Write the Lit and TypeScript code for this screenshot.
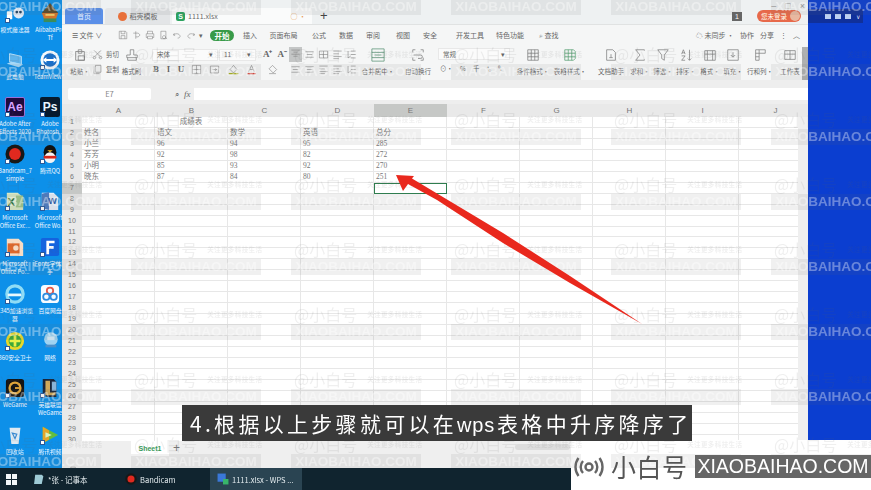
import { LitElement, html, css, svg } from "lit";
import { customElement } from "lit/decorators.js";

const ICONS: Record<string, any> = {
  save: svg`<path d="M2 2h10l2 2v10H2zM5 2v4h6V2M5 14v-5h6v5"/>`,
  share: svg`<path d="M2 5h8l3 3-3 3H6M6 2v12"/>`,
  print: svg`<path d="M4 6V2h8v4M4 12H2V6h12v6h-2M4 10h8v4H4z"/>`,
  preview: svg`<path d="M3 2h8v12H3zM8 9a2.500 2.500 0 1 0 .1 0M10 12l3 2"/>`,
  undo: svg`<path d="M4 5l-2 3 3 1M3 8c2-3 9-3 10 2-.3 2-2 3-4 3"/>`,
  redo: svg`<path d="M12 5l2 3-3 1M13 8c-2-3-9-3-10 2 .3 2 2 3 4 3"/>`,
  paste: svg`<path d="M3 4h3V2h4v2h3v10H3zM6 4h4v2H6zM6 9h7v5H6z"/>`,
  cut: svg`<path d="M3 2l9 9M13 2l-9 9"/><circle cx="3.500" cy="12.500" r="1.800"/><circle cx="12.500" cy="12.500" r="1.800"/>`,
  copy: svg`<path d="M5 2h8v10H5zM3 4v10h8"/>`,
  brush: svg`<path d="M6 2h4v6h4v3H2V8h4zM3 11v3h10v-3"/>`,
  border: svg`<path d="M2 2h12v12H2zM8 2v12M2 8h12"/>`,
  merge: svg`<path d="M2 3h12v10H2zM5 8h6M9 6l2 2-2 2"/>`,
  fill: svg`<path d="M8 2l5 6-5 5-5-5z"/><path d="M1 14h14" stroke="#a8b020" stroke-width="2"/>`,
  color: svg`<path d="M4 11l4-9 4 9M5.500 8h5"/><path d="M2 14h12" stroke="#d9453a" stroke-width="2"/>`,
  clear: svg`<path d="M8 2l6 6-5 5-6-6zM3 14h10"/>`,
  a1: svg`<path d="M2 3h12M5 6h6M2 9h12M5 12h6"/>`,
  a2: svg`<path d="M2 4h12M4 8h8M2 12h12"/>`,
  a3: svg`<path d="M2 3h12v10H2zM2 8h12M8 3v10"/>`,
  a4: svg`<path d="M2 3h12M2 7h8M2 11h12M2 14h8"/>`,
  a5: svg`<path d="M3 3v10l4-3M7 3h7M7 8h7M7 13h7"/>`,
  mergeBig: svg`<path d="M1 1h14v14H1zM1 5h14M1 11h14M4 8h8" stroke="#4e8a6a"/>`,
  wrap: svg`<path d="M2 2v3M2 2h3M14 2v3M14 2h-3M2 14v-3M2 14h3M14 14v-3M14 14h-3M3 8h8a2 2 0 0 1 0 4H8"/>`,
  cond: svg`<path d="M2 2h12v12H2zM2 6h12M2 10h12M6 2v12M10 2v12"/>`,
  table: svg`<path d="M2 2h10l2 2v8l-2 2H2zM2 6h12M2 10h12M6 2v12M10 2v12" stroke="#4e9a6a"/>`,
  doc: svg`<path d="M3 2h7l3 3v9H3zM8 7v4M6 11h4"/>`,
  sum: svg`<path d="M13 3V2H3l5 6-5 6h10v-1"/>`,
  filter: svg`<path d="M2 2h12L9.500 8v6l-3-2V8z"/>`,
  sort: svg`<path d="M3 7l2-5 2 5M3.500 5.500h3M3 9h4l-4 5h4M12 2v12M10 12l2 2 2-2"/>`,
  format: svg`<path d="M2 3h12v11H2zM2 7h12M5 3v11M11 3v11"/>`,
  down: svg`<path d="M2 2h12v12H2zM8 5v5M5.500 8L8 10.500 10.500 8"/>`,
  rows: svg`<path d="M3 2h4v12H3zM7 2h7v4H7M3 6h4M3 10h4"/>`,
  sheet: svg`<path d="M2 3h12v10H2zM2 7h12M8 3v10"/>`,
};

function ic(name: string, cls = "i") {
  return html`<svg class=${cls} viewBox="0 0 16 16">${ICONS[name]}</svg>`;
}

const DESK: Record<string, any> = {
  tool: svg`<rect x="2" y="9" width="6" height="9" rx="1" fill="#fff"/><circle cx="15" cy="11" r="6" fill="#dfe9f5"/><circle cx="13" cy="10" r="1.500" fill="#246"/><circle cx="17" cy="10" r="1.500" fill="#246"/>`,
  ali: svg`<path d="M11 0l9 11H2z" fill="#5b4a2a"/><path d="M2 11h18l-3 8H5z" fill="#d2742c"/><path d="M6 12h10v2H6z" fill="#f2d26a"/><path d="M4 17h14v4H4z" fill="#3d8c5a"/>`,
  pc: svg`<path d="M5 4l13 3v9L5 13z" fill="#5fb4ec" stroke="#bfe3fa"/><path d="M2 15l13 4 5-3-13-3z" fill="#a6d8f7"/>`,
  tv: svg`<circle cx="11" cy="11" r="10.500" fill="#f4f8fc"/><circle cx="11" cy="11" r="7.500" fill="#1a6fc9"/><path d="M3 11l4-3v2h8V8l4 3-4 3v-2H7v2z" fill="#fff"/>`,
  band: svg`<circle cx="11" cy="11" r="10.500" fill="#181818"/><circle cx="11" cy="11" r="6.500" fill="#e0291f"/>`,
  qq: svg`<ellipse cx="11" cy="9" rx="7" ry="8" fill="#111"/><ellipse cx="11" cy="15" rx="6" ry="6" fill="#f4f4f4"/><path d="M4 13h14v3H4z" fill="#d8291c"/><path d="M8 7h6l-3 2z" fill="#f3b52a"/>`,
  xl: svg`<path d="M2 2h12l6 5v14H2z" fill="#d8e8c4"/><path d="M12 5h8v13h-8z" fill="#9fc68a"/><text x="3" y="16" font-size="12" font-weight="700" fill="#1f6b32" font-family="Liberation Sans">X</text>`,
  wd: svg`<path d="M2 2h13l5 5v14H2z" fill="#e6eef9"/><path d="M2 3l8-2v20l-8-2z" fill="#4d7cc2"/><text x="9" y="14" font-size="10" font-weight="700" fill="#2a5aa8" font-family="Liberation Sans">W</text>`,
  pp: svg`<path d="M2 2h13l5 5v14H2z" fill="#f7dcc4"/><path d="M3 7h13v11H3z" fill="#e0692c"/><circle cx="12" cy="12" r="3" fill="#f7dcc4"/>`,
  ff: svg`<rect x="1" y="1" width="20" height="20" rx="2" fill="#1463de"/><path d="M7 4h9v3h-6v3h5v3h-5v6H7z" fill="#fff"/>`,
  ie: svg`<circle cx="11" cy="11" r="9" fill="none" stroke="#8fdcf5" stroke-width="3.500"/><path d="M3 12h15" stroke="#e9f8fd" stroke-width="3"/>`,
  bd: svg`<rect x="1" y="1" width="20" height="20" rx="4" fill="#f6fbff"/><circle cx="11" cy="7.500" r="3.500" fill="none" stroke="#e35a4a" stroke-width="2"/><circle cx="7" cy="14" r="3.500" fill="none" stroke="#2d8ce0" stroke-width="2"/><circle cx="15" cy="14" r="3.500" fill="none" stroke="#2d8ce0" stroke-width="2"/>`,
  s360: svg`<circle cx="11" cy="11" r="10" fill="#e8d82a"/><circle cx="11" cy="11" r="7" fill="#3ba83a"/><path d="M9.500 5h3v4.500H17v3h-4.500V17h-3v-4.500H5v-3h4.500z" fill="#e8f04a"/>`,
  net: svg`<circle cx="12" cy="9" r="7.500" fill="#9fd3f2"/><path d="M6 15h12v3H6z" fill="#4c8fc9"/><path d="M8 6h8v4H8z" fill="#d7eefb"/>`,
  wg: svg`<rect x="1" y="1" width="20" height="20" rx="3" fill="#141414"/><circle cx="11" cy="11" r="6" fill="none" stroke="#e2a63a" stroke-width="2.500"/><path d="M11 11h6" stroke="#e2a63a" stroke-width="2"/>`,
  lol: svg`<path d="M3 1h12l3 3v17H8L3 17z" fill="#17243a"/><path d="M6 3h5v13h6v3H6z" fill="#d0a95a"/><path d="M13 4h5v10h-5z" fill="#8ab4d8"/>`,
  bin: svg`<path d="M5 3h12l-2 18H7z" fill="#dfeaf2"/><path d="M8 9l5 1-2 5z" fill="none" stroke="#3a8ad0" stroke-width="1.300"/>`,
  vid: svg`<path d="M3 2l17 9-17 9z" fill="#63bd3e"/><path d="M3 2l7 4v10l-7 4z" fill="#e5a62a"/><path d="M6 8l7 3-7 3z" fill="#d7f3c0"/>`,
};

const DESKTOP = [
  ["tool", "模式魔法器", "", 1], ["ali", "AlibabaPro", "Tf", 0],
  ["pc", "此电脑", "", 0], ["tv", "TeamView...", "", 1],
  ["ae", "Adobe After", "Effects 2020", 1], ["ps", "Adobe", "Photosh...", 1],
  ["band", "Bandicam_7", "simple", 1], ["qq", "腾讯QQ", "", 1],
  ["xl", "Microsoft", "Office Exc...", 1], ["wd", "Microsoft", "Office Wo...", 1],
  ["pp", "Microsoft", "Office Po...", 1], ["ff", "iFonts字体助", "手", 1],
  ["ie", "2345加速浏览", "器", 1], ["bd", "百度网盘", "", 0],
  ["s360", "360安全卫士", "", 1], ["net", "网络", "", 0],
  ["wg", "WeGame", "", 1], ["lol", "英雄联盟", "WeGame", 1],
  ["bin", "回收站", "", 0], ["vid", "腾讯视频", "", 1],
] as const;

const MENUS = [["插入", 32], ["页面布局", 35], ["公式", 36], ["数据", 18], ["审阅", 36], ["视图", 24], ["安全", 30], ["开发工具", 50], ["特色功能", 30]] as const;
const BIG = [
  ["cond", "条件格式·", 30], ["table", "表格样式·", 44], ["doc", "文档助手", 38], ["sum", "求和·", 20], ["filter", "筛选·", 26],
  ["sort", "排序·", 20], ["format", "格式·", 28], ["down", "填充·", 18], ["rows", "行和列·", 36], ["sheet", "工作表", 24],
] as const;
const FONT_TOOLS = [
  ["B", "", 12], ["I", "", 13], ["U", "", 12], ["", "border", 18], ["", "merge", 18], ["", "fill", 20], ["", "color", 17], ["", "clear", 24],
] as const;
const COLS = "ABCDEFGHIJ".split("");
const DATA: Record<number, string[]> = {
  2: ["姓名", "语文", "数学", "英语", "总分"],
  3: ["小兰", "96", "94", "95", "285"],
  4: ["芳芳", "92", "98", "82", "272"],
  5: ["小明", "85", "93", "92", "270"],
  6: ["晓东", "87", "84", "80", "251"],
};

@customElement("app-root")
export class AppRoot extends LitElement {
  static styles = css`
    :host { display: block; width: 871px; height: 490px; position: relative; overflow: hidden;
      font-family: "Noto Sans CJK SC", "Liberation Sans", sans-serif; color: #666; background: #0b3ed0; }
    .stage { display: grid; grid-template-columns: 62px 746px 63px; grid-template-rows: 468px 22px; width: 871px; height: 490px; filter: blur(.5px); }
    .desktop { background: #0d90e9; display: grid; grid-template-columns: 30px 40px; width: 62px; grid-auto-rows: 46.9px; padding-top: 3px; box-sizing: border-box; overflow: hidden; }
    .dk { display: flex; flex-direction: column; align-items: center; color: #f2f8ff; font-size: 5.800px; line-height: 8px; white-space: nowrap; position: relative; }
    .dk svg, .tile { width: 20px; height: 20px; flex: none; margin-bottom: 3px; }
    .tile { display: flex; align-items: center; justify-content: center; border-radius: 2px; font: 700 12px "Liberation Sans", sans-serif; box-sizing: border-box; }
    .tile.ae { background: #1f0a3c; color: #d7a5ff; border: 1px solid #9a70d8; }
    .tile.ps { background: #061a2e; color: #eaf6ff; }
    .arrow { position: absolute; left: calc(50% - 10px); top: 15px; width: 5px; height: 5px; background: #fff; border: 1px solid #2a5a9a; box-sizing: border-box; }
    .win { background: #f3f4f4; display: flex; flex-direction: column; min-width: 0; overflow: hidden; }
    .tabs { height: 25px; display: flex; align-items: flex-end; background: #eef1f2; padding-left: 3px; flex: none; position: relative; box-sizing: border-box; border-bottom: 1px solid #e0e2e2; }
    .tab { height: 16px; display: flex; align-items: center; justify-content: center; font-size: 7px; border-radius: 3px 3px 0 0; box-sizing: border-box; gap: 3px; }
    .t-home { width: 38px; background: #5a8fe8; color: #e8f0ff; margin-right: 2px; }
    .t-tpl { width: 65px; background: #e3e5e7; }
    .t-file { width: 140px; background: #fafbfb; justify-content: flex-start; padding-left: 4px; margin-left: 2px; position: relative; }
    .sq { width: 9px; height: 9px; border-radius: 2px; background: #2ca25f; color: #fff; font: 700 7px/9px "Liberation Sans"; text-align: center; }
    .dot { width: 9px; height: 9px; border-radius: 50%; background: #e8703a; }
    .t-dots { margin-left: auto; margin-right: 6px; font-size: 7px; color: #e89a50; }
    .plus { font: 400 13px/16px "Liberation Sans"; margin-left: 8px; align-self: center; color: #444; padding-top: 7px; }
    .spacer { flex: 1; }
    .badge { width: 10px; height: 9px; background: #666; color: #fff; font: 7px/9px "Liberation Sans"; text-align: center; margin-bottom: 3px; }
    .login { width: 44px; height: 12px; margin: 0 7px 2px 15px; background: #e7694a; color: #ffe; border-radius: 6px; font-size: 6.500px; line-height: 12px; padding: 0 1px 0 4px; box-sizing: border-box; display: flex; justify-content: space-between; align-items: center; }
    .login i { width: 10px; height: 10px; border-radius: 50%; background: #e8b8a0; }
    .ctl { position: absolute; right: 3px; top: 0; height: 9px; display: flex; gap: 9px; align-items: center; font: 9px/9px "Liberation Sans"; color: #999; padding-top: 2px; }
    .menu { height: 20px; display: flex; align-items: center; flex: none; font-size: 7px; background: #f5f6f6; padding-left: 10px; box-sizing: border-box; }
    .menu .i { width: 10px; height: 10px; margin-right: 3.500px; }
    .file { width: 46px; flex: none; }
    .start { width: 24px; height: 11px; border-radius: 6px; background: #389a48; color: #fff; font-size: 7.500px; line-height: 11px; text-align: center; margin: 0 0 0 7px; font-weight: 700; flex: none; }
    .mi { text-align: center; flex: none; white-space: nowrap; }
    .find { margin-left: 14px; }
    .right { margin-left: auto; display: flex; gap: 6px; padding-right: 8px; align-items: center; white-space: nowrap; }
    .i { fill: none; stroke: #777; stroke-width: .8; width: 13px; height: 13px; flex: none; }
    .ribbon { height: 35px; display: flex; flex: none; padding-left: 6px; box-sizing: border-box; background: #f5f6f6; font-size: 6.500px; line-height: 9px; position: relative; }
    .big { display: flex; flex-direction: column; align-items: center; flex: none; padding-top: 3px; white-space: nowrap; gap: 5px; box-sizing: border-box; }
    .big .i { width: 14px; height: 14px; }
    .stack { display: flex; flex-direction: column; flex: none; padding-top: 3px; gap: 2px; }
    .r { display: flex; align-items: center; height: 13px; gap: 3px; white-space: nowrap; }
    .r .i { width: 11px; height: 11px; }
    .cell { display: flex; justify-content: center; align-items: center; flex: none; }
    .tight { gap: 0; }
    .hl { background: #c4c6c6; outline: 1px solid #c4c6c6; }
    .inset { margin-left: 2px; }
    .ml { margin-left: 7px; } .ml2 { margin-left: 5px; }
    .sel { background: #fbfbfb; height: 12px; border: 1px solid #e8e8e8; display: flex; align-items: center; padding: 0 4px; box-sizing: border-box; justify-content: space-between; flex: none; }
    .fs { width: 66px; } .sz { width: 37px; margin-left: 1px; } .nm { width: 72px; }
    .glyph { font: 700 9px/13px "Liberation Serif"; color: #666; }
    .scrollr { position: absolute; right: 0; top: 2px; width: 6px; height: 33px; background: #aeb0b0; }
    .fx { height: 24px; flex: none; background: #eeeeee; display: flex; align-items: center; padding: 4px 0 0 6px; box-sizing: border-box; font-size: 7.500px; }
    .name { width: 83px; height: 12px; background: #fff; border-radius: 2px; text-align: center; line-height: 12px; color: #888; flex: none; margin-right: 24px; }
    .fxt { font: italic 9px "Liberation Serif"; margin: 0 3px 0 5px; }
    .fxi { flex: 1; height: 12px; background: #fff; }
    .sheet { flex: 1; min-height: 0; display: grid; grid-template-columns: 20px repeat(10, 73px); grid-auto-rows: 10.960px; align-content: start; background: #fff; overflow: hidden; font: 7.500px/10.960px "Liberation Serif", "Noto Sans CJK SC", serif; position: relative; }
    .hd { display: grid; grid-template-columns: 20px repeat(10, 73px); height: 13px; flex: none; background: #e9e9e9; font: 8px/13px "Liberation Sans"; color: #777; text-align: center; }
    .hd .on { background: #c6c8c6; border-bottom: 1.500px solid #4e9a6a; box-sizing: border-box; }
    .rh { background: #e9e9e9; text-align: center; font: 7px/10.960px "Liberation Sans"; color: #777; }
    .rh.on { background: #c6c8c6; }
    .c { border-right: 1px solid #e7e7e7; border-bottom: 1px solid #e7e7e7; padding-left: 2px; box-sizing: border-box; white-space: nowrap; overflow: hidden; color: #777; }
    .c.ctr { text-align: center; padding: 0; }
    .c.sel7 { outline: 1.200px solid #2f7d4f; outline-offset: -1px; }
    .vscroll { position: absolute; right: 0; top: 0; bottom: 0; width: 10px; background: #efefef; }
    .grid-wrap { flex: 1; min-height: 0; position: relative; display: flex; }
    .sbar { height: 15px; flex: none; background: #efefef; display: flex; padding-left: 69px; align-items: stretch; font: 7px/15px "Liberation Sans"; position: relative; }
    .s1 { width: 38px; background: #fff; color: #3a9a5a; text-align: center; font-weight: 700; }
    .sp { font-size: 12px; margin-left: 4px; color: #777; }
    .hs { position: absolute; left: 453px; top: 3px; width: 55px; height: 6px; background: #dcdcdc; border-radius: 3px; }
    .status { height: 12px; flex: none; background: #efefef; padding-left: 6px; }
    .status .i { width: 9px; height: 9px; }
    .rightblue { background: #0b3ed0; padding: 9px 8px 0 0; }
    .pan { height: 14px; background: #10309a; display: flex; align-items: center; gap: 4px; padding-left: 17px; box-sizing: border-box; }
    .pan i { width: 6px; height: 5px; background: #bcd0f2; }
    .pan b { font: 6px "Liberation Sans"; color: #dde; margin-left: 1px; }
    .taskbar { grid-column: 1 / -1; background: #10242f; display: flex; align-items: center; color: #e4ecef; font-size: 7.500px; }
    .win-logo { margin: 0 0 0 6px; width: 11px; height: 11px; display: grid; grid-template-columns: 1fr 1fr; gap: 1px; flex: none; }
    .win-logo i { background: #f2f6f8; }
    .tb { height: 22px; display: flex; align-items: center; gap: 3px; flex: none; white-space: nowrap; box-sizing: border-box; }
    .tb svg { width: 12px; height: 12px; flex: none; }
    .n1 { width: 80px; padding-left: 16px; }
    .n2 { width: 113px; padding-left: 28px; }
    .n3 { width: 92px; padding-left: 7px; background: #2a4452; }
    .wm-clip { position: absolute; left: 0; top: 0; width: 871px; height: 468px; overflow: hidden; pointer-events: none; }
    .wm { position: absolute; left: -29px; top: -25px; display: grid; grid-template-columns: repeat(6, 160px); grid-auto-rows: 65px; }
    .wc { padding: 4px 0 0 3px; box-sizing: border-box; }
    .wa { height: 20px; display: flex; align-items: center; color: rgba(95,95,95,.1); font: 16px/20px "Noto Sans CJK SC", sans-serif; white-space: nowrap; }
    .wa span { font-size: 6.500px; margin-left: 10px; font-weight: 700; letter-spacing: .4px; }
    .wb { margin-left: -3px; width: 130px; height: 16px; background: rgba(110,110,110,.1); color: rgba(255,255,255,.36); font: 700 13.500px/16px "Liberation Sans", sans-serif; text-align: center; white-space: nowrap; overflow: hidden; }
    .redarrow { position: absolute; left: 0; top: 0; width: 871px; height: 490px; pointer-events: none; }
    .sub { position: absolute; left: 182px; top: 405px; width: 510px; height: 36px; background: #3a3a3a; color: #fff; font: 400 21px/36px "Noto Sans CJK SC", sans-serif; letter-spacing: 3.300px; padding-left: 8px; box-sizing: border-box; white-space: nowrap; overflow: hidden; }
    .sub span { font-family: "Liberation Sans", sans-serif; font-size: 20px; letter-spacing: .8px; margin-right: 2px; }
    .panel { position: absolute; left: 571px; top: 440px; width: 300px; height: 50px; background: #fff; }
    .logo { position: absolute; left: 572px; top: 455px; width: 299px; height: 23px; display: flex; align-items: center; }
    .logo svg { width: 34px; height: 22px; flex: none; fill: none; stroke: #666; stroke-width: 2.400; }
    .lt { width: 84px; flex: none; color: #555; font: 400 25px/23px "Noto Sans CJK SC", sans-serif; letter-spacing: .5px; margin-left: 5px; white-space: nowrap; }
    .lb { flex: 1; height: 23px; background: #666; color: #fff; font: 400 19.500px/23px "Liberation Sans", sans-serif; text-align: center; white-space: nowrap; }
  `;

  private deskIcon(k: string) {
    if (k === "ae") return html`<div class="tile ae">Ae</div>`;
    if (k === "ps") return html`<div class="tile ps">Ps</div>`;
    return html`<svg viewBox="0 0 22 22">${DESK[k]}</svg>`;
  }

  render() {
    const rows = Array.from({ length: 30 }, (_, i) => i + 1);
    return html`
      <div class="stage">
        <div class="desktop">
          ${DESKTOP.map(([k, a, b, s]) => html`<div class="dk">${this.deskIcon(k)}${s ? html`<i class="arrow"></i>` : ""}<span>${a}</span><span>${b}</span></div>`)}
        </div>
        <div class="win">
          <div class="tabs">
            <div class="tab t-home">首页</div>
            <div class="tab t-tpl"><i class="dot"></i>稻壳模板</div>
            <div class="tab t-file"><i class="sq">S</i>1111.xlsx<span class="t-dots">○ •</span></div>
            <div class="plus">+</div>
            <div class="spacer"></div>
            <div class="badge">1</div>
            <div class="login">您未登录<i></i></div>
            <div class="ctl"><span>–</span><span>□</span><span>×</span></div>
          </div>
          <div class="menu">
            <div class="r file">☰ 文件 ∨</div>
            ${["save", "share", "print", "preview", "undo", "redo"].map((n) => ic(n))}
            <span>▾</span>
            <div class="start">开始</div>
            ${MENUS.map(([t, w]) => html`<div class="mi" style="width:${w}px">${t}</div>`)}
            <div class="r find">⌕ 查找</div>
            <div class="right"><span>☁ 未同步 ·</span><span>协作</span><span>分享</span><span>⋮</span><span>︿</span></div>
          </div>
          <div class="ribbon">
            <div class="big" style="width:24px">${ic("paste")}粘贴·</div>
            <div class="stack" style="width:28px">
              <div class="r">${ic("cut")}剪切</div>
              <div class="r">${ic("copy")}复制</div>
            </div>
            <div class="big" style="width:23px">${ic("brush")}格式刷</div>
            <div class="stack ml" style="width:140px">
              <div class="r tight inset"><div class="sel fs">宋体<span>▾</span></div><div class="sel sz">11<span>▾</span></div><span class="glyph ml">A⁺</span><span class="glyph ml2">A⁻</span></div>
              <div class="r tight">${FONT_TOOLS.map(([g, n, w]) => html`<div class="cell" style="width:${w}px">${g ? html`<span class="glyph">${g}</span>` : ic(n)}</div>`)}</div>
            </div>
            <div class="stack" style="width:68px">
              <div class="r"><span class="hl">${ic("a1")}</span>${ic("a2")}${ic("a3")}${ic("a4")}${ic("a5")}</div>
              <div class="r">${ic("a2")}${ic("a2")}${ic("a4")}${ic("a4")}${ic("a5")}</div>
            </div>
            <div class="big" style="width:40px">${ic("mergeBig")}合并居中·</div>
            <div class="big" style="width:40px">${ic("wrap")}自动换行</div>
            <div class="stack" style="width:80px">
              <div class="sel nm">常规<span>▾</span></div>
              <div class="r" style="gap:7px;padding-left:2px"><span>⊙·</span><span>%</span><span>千</span><span>⁺₀</span><span>⁰₊</span></div>
            </div>
            ${BIG.map(([n, t, w]) => html`<div class="big" style="width:${w}px">${ic(n)}${t}</div>`)}
            <div class="scrollr"></div>
          </div>
          <div class="fx"><div class="name">E7</div>⌕<span class="fxt">fx</span><div class="fxi"></div></div>
          <div class="hd"><div></div>${COLS.map((c) => html`<div class=${c === "E" ? "on" : ""}>${c}</div>`)}</div>
          <div class="grid-wrap">
            <div class="sheet">
              ${rows.map((r) => html`<div class="rh ${r === 7 ? "on" : ""}">${r}</div>${COLS.map((c, i) => {
                const t = r === 1 && i === 1 ? "成绩表" : DATA[r]?.[i] ?? "";
                const cls = `c ${r === 1 && i === 1 ? "ctr" : ""} ${r === 7 && c === "E" ? "sel7" : ""}`;
                return html`<div class=${cls}>${t}</div>`;
              })}`)}
            </div>
            <div class="vscroll"></div>
          </div>
          <div class="sbar"><div class="s1">Sheet1</div><span class="sp">+</span><div class="hs"></div></div>
          <div class="status">${ic("copy")}</div>
        </div>
        <div class="rightblue"><div class="pan"><i></i><i></i><i></i><b>∨</b></div></div>
        <div class="taskbar">
          <div class="win-logo"><i></i><i></i><i></i><i></i></div>
          <div class="tb n1"><svg viewBox="0 0 22 22"><path d="M4 3h12l3 3-3 14H2z" fill="#9fcbd6"/></svg>*张 - 记事本</div>
          <div class="tb n2"><svg viewBox="0 0 22 22">${DESK.band}</svg>Bandicam</div>
          <div class="tb n3"><svg viewBox="0 0 22 22"><rect x="1" y="1" width="15" height="15" fill="#3a78d8"/><rect x="11" y="11" width="10" height="10" fill="#38b56a"/></svg>1111.xlsx - WPS ...</div>
        </div>
      </div>
      <div class="panel"></div>
      <div class="wm-clip"><div class="wm">
        ${Array.from({ length: 48 }, () => html`<div class="wc"><div class="wa">@小白号<span>关注更多科技生活</span></div><div class="wb">XIAOBAIHAO.COM</div></div>`)}
      </div></div>
      <svg class="redarrow" viewBox="0 0 871 490"><path d="M396 175L414 176 412 178.500 503 233 570 276 642 324 570 283 503 243 437 200 408 184 403 191Z" fill="#e9281d"/></svg>
      <div class="sub">4.根据以上步骤就可以在<span>wps</span>表格中升序降序了</div>
      <div class="logo">
        <svg viewBox="0 0 34 22"><circle cx="17" cy="11" r="3.500"/><path d="M11 5a9 9 0 0 0 0 12M23 5a9 9 0 0 1 0 12M6.500 2a15 15 0 0 0 0 18M27.500 2a15 15 0 0 1 0 18"/></svg>
        <div class="lt">小白号</div>
        <div class="lb">XIAOBAIHAO.COM</div>
      </div>
    `;
  }
}
